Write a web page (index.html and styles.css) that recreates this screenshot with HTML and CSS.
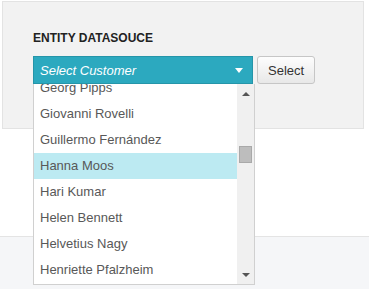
FILE: index.html
```html
<!DOCTYPE html>
<html>
<head>
  <meta charset="utf-8">
  <title>Entity Datasource</title>
  <link rel="stylesheet" href="styles.css">
</head>
<body>
  <div class="panel">
    <div class="field-label">ENTITY DATASOUCE</div>
    <div class="field-row">
      <div class="combo">
        <div class="combo-box">
          <span class="combo-text">Select Customer</span>
          <span class="caret"></span>
        </div>
        <div class="combo-list">
          <ul class="items">
            <li>Georg Pipps</li>
            <li>Giovanni Rovelli</li>
            <li>Guillermo Fernández</li>
            <li class="hover">Hanna Moos</li>
            <li>Hari Kumar</li>
            <li>Helen Bennett</li>
            <li>Helvetius Nagy</li>
            <li>Henriette Pfalzheim</li>
          </ul>
          <div class="scrollbar">
            <span class="arrow-up"></span>
            <div class="track"><div class="thumb"></div></div>
            <span class="arrow-down"></span>
          </div>
        </div>
      </div>
      <button class="btn">Select</button>
    </div>
  </div>

  <div class="footer"></div>
</body>
</html>
```

FILE: styles.css
```css
* {
  margin: 0;
  padding: 0;
  box-sizing: border-box;
}

body {
  background: #fff;
  font-family: "Liberation Sans", Arial, sans-serif;
  font-size: 13px;
  color: #555;
  height: 289px;
  overflow: hidden;
}

.panel {
  margin: 1px 5px 0 2px;
  height: 128px;
  padding: 28px 0 0 30px;
  background: #f2f2f2;
  border: 1px solid #e3e3e3;
}

.field-label {
  font-size: 12px;
  font-weight: bold;
  color: #222;
  line-height: 16px;
  margin-bottom: 10px;
}

.field-row {
  display: flex;
  gap: 4px;
}

/* combo box */
.combo {
  position: relative;
  width: 220px;
}

.combo-box {
  height: 28px;
  display: flex;
  align-items: center;
  justify-content: space-between;
  padding: 0 9px 0 6px;
  background: #2ca9bf;
  border: 1px solid #2595a9;
  color: #fff;
}

.combo-text {
  font-style: italic;
  font-size: 13px;
}

.caret {
  width: 0;
  height: 0;
  border-left: 4px solid transparent;
  border-right: 4px solid transparent;
  border-top: 5px solid #fff;
}

.combo-list {
  position: absolute;
  top: 28px;
  left: 0;
  width: 222px;
  height: 201px;
  display: flex;
  background: #fff;
  border: 1px solid #d0d0d0;
  border-top: none;
  z-index: 10;
}

.items {
  list-style: none;
  flex: 1;
  overflow: hidden;
}

.items li {
  height: 26px;
  line-height: 26px;
  padding-left: 6px;
  color: #585858;
  white-space: nowrap;
}

/* list is scrolled a little past the first entry */
.items li:first-child {
  margin-top: -9px;
}

.items li.hover {
  background: #bceaf2;
}

/* fake scrollbar */
.scrollbar {
  width: 17px;
  background: #f0f0f0;
  display: flex;
  flex-direction: column;
  align-items: center;
}

.arrow-up,
.arrow-down {
  width: 0;
  height: 0;
  border-left: 4px solid transparent;
  border-right: 4px solid transparent;
}

.arrow-up {
  margin-top: 8px;
  border-bottom: 4px solid #555;
}

.arrow-down {
  margin-bottom: 7px;
  border-top: 4px solid #555;
}

.track {
  flex: 1;
  width: 100%;
  padding: 50px 2px 0;
}

.thumb {
  height: 17px;
  background: #bdbdbd;
  border: 1px solid #a9a9a9;
}

.btn {
  height: 28px;
  padding: 0 10px;
  font-family: inherit;
  font-size: 13px;
  color: #333;
  background: linear-gradient(#fdfdfd, #e8e8e8);
  border: 1px solid #c6c6c6;
  border-radius: 3px;
}

.footer {
  margin-top: 107px;
  height: 60px;
  background: #f5f6f8;
  border-top: 1px solid #e4e4e4;
}
```
